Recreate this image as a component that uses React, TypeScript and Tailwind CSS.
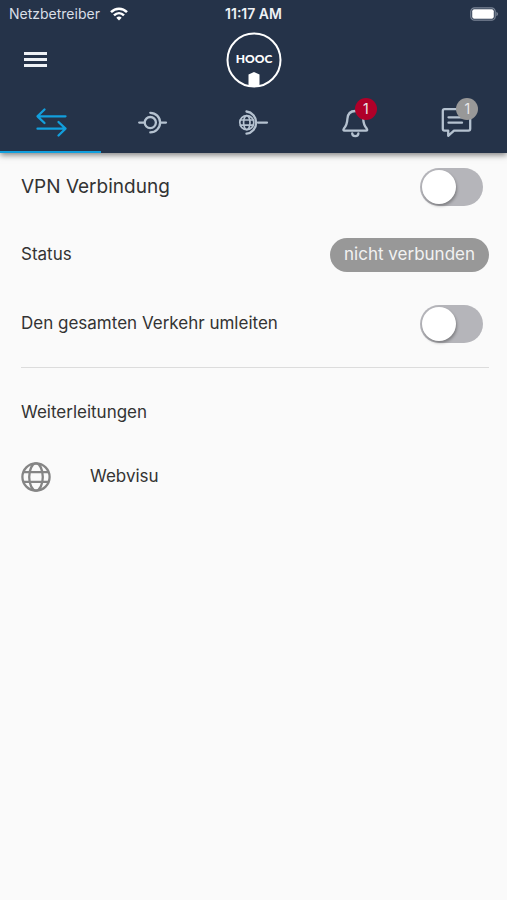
import { useState } from "react";
import type { ReactNode } from "react";

function StatusBar() {
  return (
    <div className="flex h-7 items-center px-[9px] text-sm text-[#d9dfe7]">
      <div className="flex flex-1 items-center gap-[10px]">
        <span>Netzbetreiber</span>
        <svg width="18" height="14" viewBox="0 0 18 14" fill="none" stroke="#fff" strokeWidth="2.5">
          <path d="M1 5.2C5.5.6 12.5.6 17 5.2" />
          <path d="M4 8.3C7 5.4 11 5.4 14 8.3" />
          <path d="M9 13.5 6.3 10.7Q9 8.5 11.7 10.7Z" fill="#fff" stroke="none" />
        </svg>
      </div>
      <span className="font-semibold text-[#eef1f5]">11:17 AM</span>
      <div className="flex flex-1 justify-end">
        <svg width="28" height="14" viewBox="0 0 28 14" fill="none">
          <rect x="0.8" y="0.8" width="24.4" height="12.4" rx="3.8" stroke="#7c8798" strokeWidth="1.2" />
          <rect x="2.2" y="2.2" width="21.6" height="9.6" rx="2" fill="#fff" />
          <path d="M26.4 4.8Q28 5.6 28 7T26.4 9.2Z" fill="#7c8798" />
        </svg>
      </div>
    </div>
  );
}

function Logo() {
  return (
    <svg width="56" height="56" viewBox="0 0 56 56" role="img" aria-label="HOOC">
      <circle cx="28" cy="28" r="26.5" fill="none" stroke="#fff" strokeWidth="2" />
      <text x="28" y="31" textAnchor="middle" fill="#fff" className="font-['Lato'] text-[12px] font-black">
        HOOC
      </text>
      <path d="M22.5 54V42.5L28 40L33.5 42.5V54Q28 55.5 22.5 54Z" fill="#fff" />
    </svg>
  );
}

const iconProps = {
  width: 40,
  height: 40,
  viewBox: "0 0 40 40",
  fill: "none",
  stroke: "currentColor",
  strokeWidth: 2.3,
  strokeLinecap: "round",
  strokeLinejoin: "round",
} as const;

function ArrowsIcon() {
  return (
    <svg {...iconProps}>
      <path d="M34.5 15.3H6.5M13.5 8.5L6.5 15.3L13.5 22" />
      <path d="M6.5 27.7H34.5M27.5 21L34.5 27.7L27.5 34.5" />
    </svg>
  );
}

function ConnectIcon() {
  return (
    <svg {...iconProps}>
      <circle cx="18.3" cy="21.6" r="5.6" />
      <path d="M18.3 11.8A9.8 9.8 0 0 1 18.3 31.4" />
      <path d="M7.2 21.6H12.7M28.2 21.6H34" />
    </svg>
  );
}

function GlobeConnectIcon() {
  return (
    <svg {...iconProps}>
      <g strokeWidth="1.7">
        <circle cx="13.8" cy="21.6" r="7" />
        <ellipse cx="13.8" cy="21.6" rx="3.2" ry="7" />
        <path d="M7.5 19H20.1M7.5 24.2H20.1" />
      </g>
      <path d="M13.5 10.5A11.2 11.2 0 0 1 13.5 32.7" />
      <path d="M25 21.6H34" />
    </svg>
  );
}

function BellIcon() {
  return (
    <svg {...iconProps}>
      <path d="M20.3 10C15.5 10 12.7 13.2 12.4 17.9C12.2 22.6 11.4 24.7 8.9 27.6C8 28.9 8.3 29.6 9.6 29.6H31C32.3 29.6 32.6 28.9 31.7 27.6C29.2 24.7 28.4 22.6 28.2 17.9C27.9 13.2 25.1 10 20.3 10Z" />
      <path d="M17.2 32.3C17.2 36 23.4 36 23.4 32.3" />
    </svg>
  );
}

function ChatIcon() {
  return (
    <svg {...iconProps}>
      <path d="M8.5 8.2H32.5Q34.2 8.2 34.2 10V27.8Q34.2 29.6 32.5 29.6H18L12.2 34.8V29.6H8.5Q6.8 29.6 6.8 27.8V10Q6.8 8.2 8.5 8.2Z" />
      <path d="M12.5 16.3H27M12.5 21.7H26" />
    </svg>
  );
}

function GlobeIcon() {
  return (
    <svg width="30" height="30" viewBox="0 0 30 30" fill="none" stroke="#858585" strokeWidth="2.3">
      <circle cx="15" cy="15" r="13.6" />
      <ellipse cx="15" cy="15" rx="6.8" ry="13.6" />
      <path d="M2.4 10.2H27.6M2.4 19.8H27.6" />
    </svg>
  );
}

interface Tab {
  id: string;
  label: string;
  icon: ReactNode;
  count?: number;
  badgeClass?: string;
}

const tabs: Tab[] = [
  { id: "vpn", label: "VPN", icon: <ArrowsIcon /> },
  { id: "connect", label: "Verbindungen", icon: <ConnectIcon /> },
  { id: "web", label: "Web", icon: <GlobeConnectIcon /> },
  { id: "alarms", label: "Alarme", icon: <BellIcon />, count: 1, badgeClass: "bg-[#b00029]" },
  { id: "messages", label: "Nachrichten", icon: <ChatIcon />, count: 1, badgeClass: "bg-[#989898]" },
];

function Switch({ id }: { id: string }) {
  return (
    <input
      id={id}
      type="checkbox"
      role="switch"
      className="mr-[6px] flex h-[38px] w-[63px] shrink-0 cursor-pointer appearance-none items-center rounded-full bg-[#b5b5ba] px-[2px] before:size-[34px] before:rounded-full before:bg-white before:shadow-[1px_2px_3px_rgba(0,0,0,0.3)] before:transition-transform checked:bg-[#129fdd] checked:before:translate-x-[25px]"
    />
  );
}

export default function App() {
  const [active, setActive] = useState("vpn");

  return (
    <div className="min-h-screen bg-[#fafafa] font-['Inter',sans-serif] text-[#333333]">
      <header className="relative bg-[#253349] shadow-[0_2px_6px_rgba(0,0,0,0.5)]">
        <StatusBar />
        <div className="grid h-[63px] grid-cols-[1fr_auto_1fr] items-center px-6">
          <button type="button" aria-label="Menü" className="flex w-[23px] flex-col gap-[3px] justify-self-start">
            <span className="h-[3px] bg-[#eef1f5]" />
            <span className="h-[3px] bg-[#eef1f5]" />
            <span className="h-[3px] bg-[#eef1f5]" />
          </button>
          <Logo />
        </div>
        <nav className="grid grid-cols-5">
          {tabs.map((tab) => (
            <button
              key={tab.id}
              type="button"
              aria-label={tab.label}
              onClick={() => setActive(tab.id)}
              className={
                active === tab.id
                  ? "flex h-[62px] items-center justify-center border-b-2 border-[#129fdd] text-[#129fdd]"
                  : "flex h-[62px] items-center justify-center border-b-2 border-transparent text-[#b5c2d0]"
              }
            >
              <span className="relative">
                {tab.icon}
                {tab.count && (
                  <span
                    className={`absolute -top-[3px] -right-[2px] flex size-[22px] items-center justify-center rounded-full text-sm text-[#e8e8e8] ${tab.badgeClass}`}
                  >
                    {tab.count}
                  </span>
                )}
              </span>
            </button>
          ))}
        </nav>
      </header>

      <main className="pr-[18px] pl-[21px] text-[17px]">
        <div className="flex h-[68px] items-center justify-between">
          <label htmlFor="vpn-switch" className="text-[19px]">
            VPN Verbindung
          </label>
          <Switch id="vpn-switch" />
        </div>
        <div className="flex h-[68px] items-center justify-between">
          <span>Status</span>
          <span className="flex h-[34px] items-center rounded-full bg-[#989898] px-[14px] text-[#f2f2f2]">nicht verbunden</span>
        </div>
        <div className="flex h-[69px] items-center justify-between">
          <label htmlFor="traffic-switch">Den gesamten Verkehr umleiten</label>
          <Switch id="traffic-switch" />
        </div>

        <hr className="mt-[9px] border-[#dcdcdc]" />

        <h2 className="mt-8 leading-6">Weiterleitungen</h2>
        <a href="#webvisu" className="mt-[38px] flex items-center gap-[39px]">
          <GlobeIcon />
          <span>Webvisu</span>
        </a>
      </main>
    </div>
  );
}
